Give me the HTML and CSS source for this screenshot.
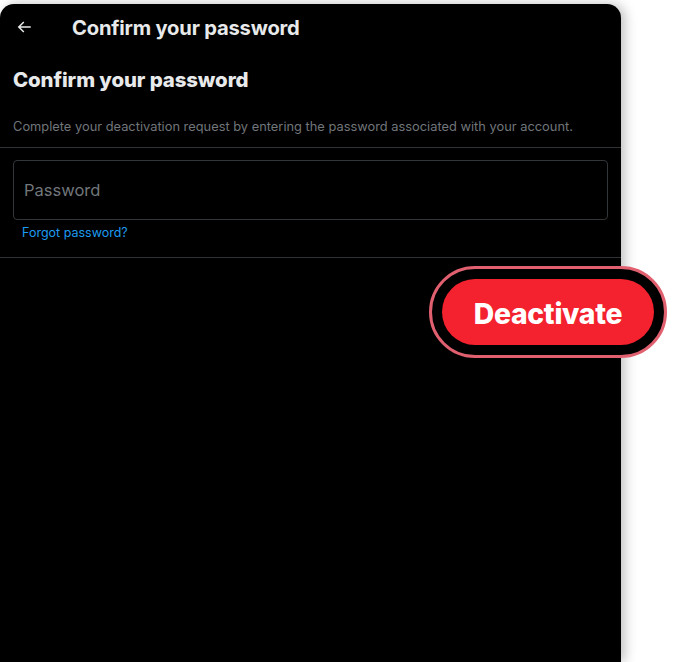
FILE: index.html
```html
<!DOCTYPE html>
<html>
<head>
<meta charset="utf-8">
<link rel="stylesheet" href="styles.css">
</head>
<body>
<div class="panel">
  <div class="topbar">
    <svg class="back" viewBox="0 0 24 24" width="18" height="18"><path d="M7.414 13l5.043 5.04-1.414 1.42L3.586 12l7.457-7.46 1.414 1.42L7.414 11H21v2H7.414z" fill="#e7e9ea"/></svg>
    <div class="topbar-title">Confirm your password</div>
  </div>
  <h1 class="heading">Confirm your password</h1>
  <p class="desc">Complete your deactivation request by entering the password associated with your account.</p>
  <div class="form">
    <div class="input">Password</div>
    <a class="forgot">Forgot password?</a>
  </div>
</div>
<div class="btn-ring"><div class="btn">Deactivate</div></div>
</body>
</html>
```
FILE: styles.css
```css
html, body {
  margin: 0;
  padding: 0;
  background: #ffffff;
  font-family: "Inter", "Liberation Sans", sans-serif;
}
body {
  position: relative;
  height: 662px;
  overflow: hidden;
  padding-top: 4px;
  box-sizing: border-box;
}
.panel {
  width: 621px;
  height: 658px;
  background: #000;
  border-radius: 14px 14px 0 0;
  box-shadow: 4px 0 12px rgba(0,0,0,0.25);
  color: #e7e9ea;
}
.topbar {
  display: flex;
  align-items: center;
  height: 46px;
  padding-left: 15px;
}
.back {
  flex: none;
}
.topbar-title {
  margin-left: 39px;
  font-size: 20.2px;
  font-weight: 700;
  letter-spacing: -0.2px;
}
.heading {
  margin: 0;
  padding: 18px 13px 0;
  font-size: 20.4px;
  font-weight: 800;
  letter-spacing: -0.1px;
  line-height: 24px;
}
.desc {
  margin: 0;
  padding: 27px 13px 12px;
  font-size: 12.85px;
  line-height: 16px;
  color: #71767b;
  border-bottom: 1px solid #2f3336;
}
.form {
  padding: 12px 13px 17px;
  border-bottom: 1px solid #2f3336;
}
.input {
  height: 58px;
  border: 1px solid #333639;
  border-radius: 4px;
  display: flex;
  align-items: center;
  padding-left: 10px;
  font-size: 16.5px;
  color: #71767b;
}
.forgot {
  display: block;
  margin: 5px 0 0 9px;
  font-size: 12.5px;
  color: #1d9bf0;
}
.btn-ring {
  position: absolute;
  left: 429px;
  top: 266px;
  width: 238px;
  height: 92px;
  box-sizing: border-box;
  border: 3px solid #e0606f;
  border-radius: 46px;
  background: #000;
  padding: 10px;
}
.btn {
  height: 100%;
  box-sizing: border-box;
  padding-top: 3px;
  border-radius: 40px;
  background: #f4212e;
  color: #fff;
  font-weight: 800;
  font-size: 28.3px;
  display: flex;
  align-items: center;
  justify-content: center;
  letter-spacing: -0.3px;
}
```
